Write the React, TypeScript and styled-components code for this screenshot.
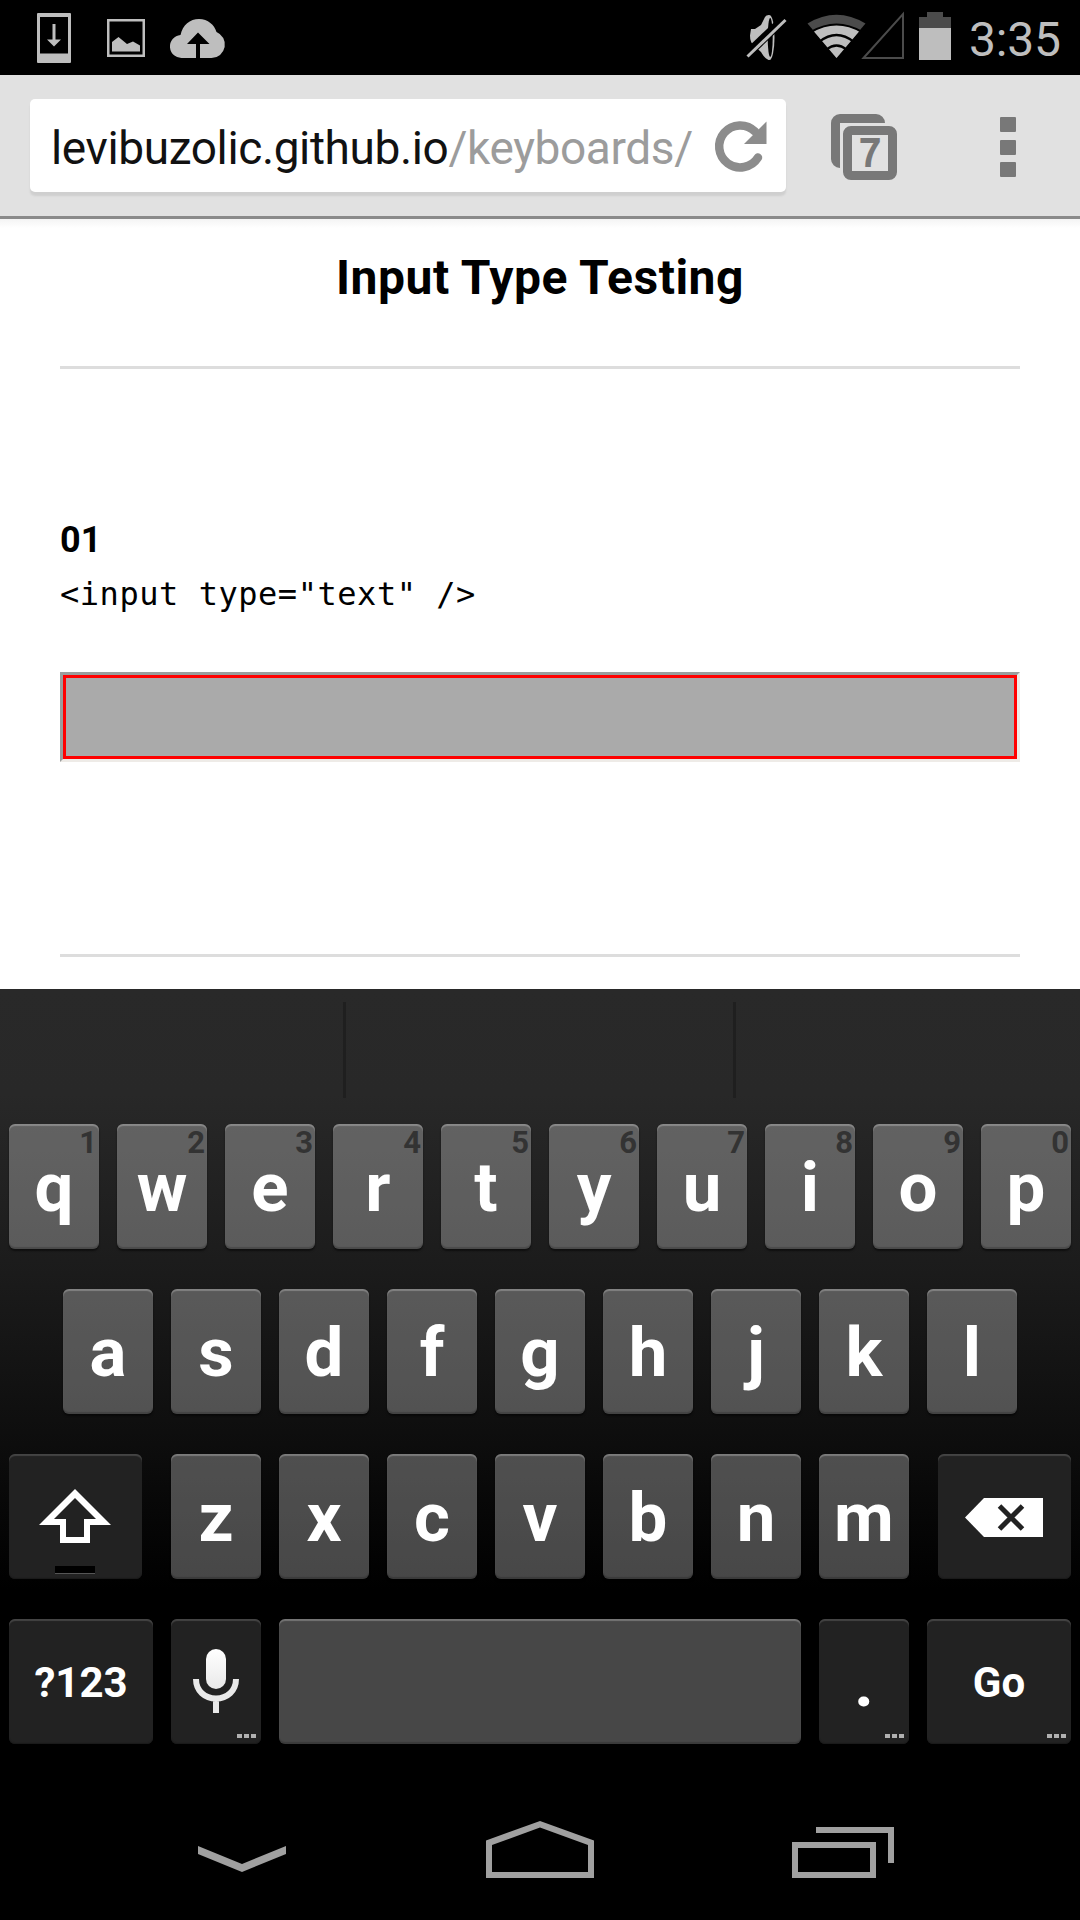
import React from "react";
import styled, { createGlobalStyle, css } from "styled-components";

const Global = createGlobalStyle`
  html, body { margin: 0; padding: 0; background: #000; }
  *, *::before, *::after { box-sizing: border-box; }
`;

const Screen = styled.main`
  display: flex;
  flex-direction: column;
  width: 1080px;
  height: 1920px;
  overflow: hidden;
  background: #000;
  font-family: Roboto, "Liberation Sans", sans-serif;
`;

/* ---------- status bar ---------- */

const StatusBar = styled.header`
  display: flex;
  align-items: center;
  justify-content: space-between;
  height: 75px;
  padding-left: 37px;
  background: #000;
`;

const Glyph = styled.svg`
  display: block;
  flex: none;
`;

const Clock = styled.time`
  width: 111px;
  padding-top: 4px;
  font-size: 48px;
  line-height: 75px;
  letter-spacing: -0.2px;
  color: #bebebe;
  white-space: nowrap;
`;

const StatusGroup = styled.div`
  display: flex;
  align-items: center;
`;

/* ---------- browser toolbar ---------- */

const Toolbar = styled.nav`
  display: flex;
  align-items: flex-start;
  height: 144px;
  padding: 24px 0 0 30px;
  background: #e1e1e1;
  border-bottom: 3px solid #8a8a8a;
`;

const Omnibox = styled.div`
  display: flex;
  align-items: center;
  width: 756px;
  height: 93px;
  padding-left: 21px;
  border-radius: 5px;
  background: #fff;
  box-shadow: 0 4px 2px #cfcfcf;
`;

const Url = styled.span`
  width: 660px;
  padding-top: 5px;
  font-size: 46px;
  line-height: 88px;
  letter-spacing: -0.38px;
  color: #111;
  white-space: nowrap;
`;

const UrlPath = styled.span`
  color: #9c9c9c;
`;

const TabsButton = styled.div`
  display: grid;
  width: 66px;
  height: 66px;
  margin: 15px 0 0 45px;
  & > * { grid-area: 1 / 1; }
`;

const TabCount = styled.span`
  padding: 12px 0 0 12px;
  text-align: center;
  font-family: "Liberation Sans", Arial, sans-serif;
  font-size: 38px;
  line-height: 55px;
  color: #787878;
  -webkit-text-stroke: 2px #787878;
`;

const MenuButton = styled.div`
  display: flex;
  flex-direction: column;
  gap: 7.5px;
  margin: 18px 0 0 103px;
`;

const MenuDot = styled.span`
  width: 16px;
  height: 15px;
  border-radius: 1px;
  background: #787878;
`;

/* ---------- web page ---------- */

const Page = styled.section`
  display: flex;
  flex-direction: column;
  height: 770px;
  padding: 0 60px;
  background: linear-gradient(#f4f4f4, #fff 9px);
  color: #000;
`;

const Title = styled.h1`
  margin: 30px 0 59px;
  text-align: center;
  font-size: 48px;
  font-weight: 700;
  line-height: 58px;
  letter-spacing: 0.5px;
  white-space: nowrap;
`;

const Rule = styled.hr`
  width: 100%;
  height: 3px;
  margin: 0;
  border: 0;
  background: #ddd;
`;

const Sample = styled.div`
  display: flex;
  flex-direction: column;
  height: 585px;
  padding-top: 148px;
`;

const Index = styled.h2`
  margin: 0;
  font-size: 36px;
  font-weight: 700;
  line-height: 46px;
`;

const Code = styled.code`
  margin: 6px 0 52px;
  font-family: "DejaVu Sans Mono", monospace;
  font-size: 32px;
  line-height: 51px;
  letter-spacing: 0.54px;
  white-space: pre;
`;

const TextField = styled.div`
  height: 90px;
  border: 3px solid;
  border-color: #9a9d9d #eeebe7 #eeebe7 #9a9d9d;
  background: #aaa;
  box-shadow: inset 0 0 0 3px #f00;
`;

/* ---------- keyboard ---------- */

const Keyboard = styled.section`
  height: 781px;
  background: linear-gradient(#292929 0, #282828 105px, #1b1b1b 285px, #0d0d0d 455px, #000 600px);
`;

const Suggestions = styled.div`
  display: grid;
  grid-template-columns: 343px 390px 1fr;
  height: 135px;
  padding: 13px 0 26px;
`;

const Suggestion = styled.div`
  & + & {
    border-left: 3px solid #1f1f1f;
  }
`;

const Rows = styled.div`
  display: flex;
  flex-direction: column;
  gap: 40px;
`;

const Row = styled.div<{ $inset?: number }>`
  display: flex;
  justify-content: space-between;
  height: 125px;
  padding: 0 ${(p) => p.$inset ?? 9}px;
`;

const KeyGroup = styled.div`
  display: flex;
  gap: 18px;
`;

const Key = styled.div<{ $w?: number; $dark?: boolean; $small?: boolean }>`
  position: relative;
  display: flex;
  align-items: center;
  justify-content: center;
  width: ${(p) => p.$w ?? 90}px;
  height: 125px;
  border-radius: 6px;
  color: #fff;
  font-size: ${(p) => (p.$small ? 42 : 69)}px;
  font-weight: 700;
  line-height: 1;
  ${(p) =>
    p.$dark
      ? css`
          background: #222;
          box-shadow: inset 0 2px 1px #444, inset 0 -1px 1px #1a1a1a;
        `
      : css`
          background: rgba(255, 255, 255, 0.28);
          box-shadow: inset 0 2px 1px rgba(255, 255, 255, 0.25), inset 0 -2px 1px rgba(0, 0, 0, 0.18), 0 2px 2px rgba(0, 0, 0, 0.5);
        `}
`;

const Letter = styled.span<{ $drop?: number }>`
  padding-top: ${(p) => p.$drop ?? 2}px;
`;

const Hint = styled.span`
  position: absolute;
  top: 3px;
  right: 2px;
  font-size: 31px;
  line-height: 32px;
  color: #333;
`;

const More = styled.span`
  position: absolute;
  right: 5px;
  bottom: 6px;
  display: flex;
  gap: 2px;
`;

const MoreDot = styled.i`
  width: 5px;
  height: 4px;
  background: #b0b0b0;
`;

const ShiftLamp = styled.span`
  position: absolute;
  left: 46px;
  bottom: 5px;
  width: 40px;
  height: 8px;
  background: #000;
  border-bottom: 1px solid #555;
`;

const DeleteGlyph = styled(Glyph)`
  margin: 2px 1px 0 0;
`;

/* ---------- navigation bar ---------- */

const NavBar = styled.footer`
  display: flex;
  align-items: flex-end;
  height: 150px;
  padding: 0 0 42px 198px;
  background: #000;
`;

const NavIcon = styled.svg<{ $gap?: number; $lift?: number }>`
  display: block;
  flex: none;
  margin-left: ${(p) => p.$gap ?? 0}px;
  margin-bottom: ${(p) => p.$lift ?? 0}px;
`;

const MoreDots = () => (
  <More>
    <MoreDot />
    <MoreDot />
    <MoreDot />
  </More>
);

const topRow = "qwertyuiop".split("");
const midRow = "asdfghjkl".split("");
const lowRow = "zxcvbnm".split("");

export default function App() {
  return (
    <Screen>
      <Global />
      <StatusBar>
        <Glyph width="190" height="75" viewBox="37 0 190 75" fill="#bebebe">
          <path fillRule="evenodd" d="M38 13h32q1 0 1 1v48q0 1-1 1H38q-1 0-1-1V14q0-1 1-1zM40 17v36.500h28V17z" />
          <path d="M52.500 24h3v15.500h5.500L54 46.500 47 39.500h5.500z" />
          <path fillRule="evenodd" d="M107 19h38v38h-38zM109.500 21.500v33h33v-33z" />
          <path d="M112 42l6.500-5L127 44l6-2.500 7 4v6h-28z" />
          <path d="M182.500 58a11.500 11.500 0 0 1-2-23C182.500 25 190 19 199 19s15.500 6 17.500 13A13.500 13.500 0 0 1 211.500 58H200V44h9.500L198 32.500 187 44h9v14z" />
        </Glyph>
        <StatusGroup>
          <Glyph width="223" height="75" viewBox="746 0 223 75">
            <g fill="#bebebe">
              <path d="M751 29h4l6-4 4-8q1-2 4-2v45q-4-1-8-8l-7-6.500q-4-3-4-10z" />
              <ellipse cx="769.500" cy="37.500" rx="5" ry="22.500" />
            </g>
            <ellipse cx="770.200" cy="37.500" rx="2.500" ry="19.500" fill="#000" />
            <path d="M744 57L784 19" stroke="#000" strokeWidth="9" />
            <path d="M747.500 56.500L785.500 20" stroke="#bebebe" strokeWidth="3" />
            <path d="M836.500 58L807.500 23.500Q836.500 6 865.500 23.500z" fill="#4b4b4b" />
            <path d="M836.500 58L813.500 31Q836.500 18 859.500 31z" fill="#bebebe" />
            <path
              d="M811 32Q836.500 17 862 32M819 42Q836.500 28 854 42M826.500 49.500Q836.500 41.500 846.500 49.500"
              fill="none"
              stroke="#000"
              strokeWidth="2.200"
            />
            <path d="M863.500 58L903 14V58z" fill="none" stroke="#4b4b4b" strokeWidth="2" />
            <path d="M919 28V17h8v-5H943v5h8v11z" fill="#4b4b4b" />
            <path d="M919 28h32v32h-32z" fill="#bebebe" />
          </Glyph>
          <Clock>3:35</Clock>
        </StatusGroup>
      </StatusBar>

      <Toolbar>
        <Omnibox>
          <Url>
            levibuzolic.github.io<UrlPath>/keyboards/</UrlPath>
          </Url>
          <Glyph width="60" height="60" viewBox="711 116 60 60">
            <path d="M758 157.500A21 21 0 1 1 755 131.500" fill="none" stroke="#8c8c8c" strokeWidth="8.500" strokeLinecap="round" />
            <path d="M766.500 121.500V144H744z" fill="#8c8c8c" />
          </Glyph>
        </Omnibox>
        <TabsButton>
          <Glyph width="66" height="66" viewBox="0 0 66 66" fill="#787878">
            <path d="M54 9A9 9 0 0 0 45 0H9A9 9 0 0 0 0 9v36a9 9 0 0 0 9 9V9z" />
            <path fillRule="evenodd" d="M20 12h38a8 8 0 0 1 8 8v38a8 8 0 0 1-8 8H20a8 8 0 0 1-8-8V20a8 8 0 0 1 8-8zM21 21v36h36V21z" />
          </Glyph>
          <TabCount>7</TabCount>
        </TabsButton>
        <MenuButton>
          <MenuDot />
          <MenuDot />
          <MenuDot />
        </MenuButton>
      </Toolbar>

      <Page>
        <Title>Input Type Testing</Title>
        <Rule />
        <Sample>
          <Index>01</Index>
          <Code>{'<input type="text" />'}</Code>
          <TextField />
        </Sample>
        <Rule />
      </Page>

      <Keyboard>
        <Suggestions>
          <Suggestion />
          <Suggestion />
          <Suggestion />
        </Suggestions>
        <Rows>
          <Row>
            {topRow.map((k, i) => (
              <Key key={k}>
                <Letter>{k}</Letter>
                <Hint>{(i + 1) % 10}</Hint>
              </Key>
            ))}
          </Row>
          <Row $inset={63}>
            {midRow.map((k) => (
              <Key key={k}>
                <Letter>{k}</Letter>
              </Key>
            ))}
          </Row>
          <Row>
            <Key $dark $w={133}>
              <Glyph width="73" height="56" viewBox="39 1489 73 56">
                <path fillRule="evenodd" fill="#fff" d="M75 1489L111 1525H90V1543H60V1525H39zM75 1498L54 1519H66V1537H84V1519H96z" />
              </Glyph>
              <ShiftLamp />
            </Key>
            <KeyGroup>
              {lowRow.map((k) => (
                <Key key={k}>
                  <Letter>{k}</Letter>
                </Key>
              ))}
            </KeyGroup>
            <Key $dark $w={133}>
              <DeleteGlyph width="78" height="39" viewBox="0 0 78 39">
                <path d="M0 19.500L19 0H78V39H19z" fill="#fff" />
                <path d="M34.500 8L57.500 31M57.500 8L34.500 31" stroke="#222" strokeWidth="5" />
              </DeleteGlyph>
            </Key>
          </Row>
          <Row>
            <Key $dark $small $w={144}>
              <Letter $drop={3}>?123</Letter>
            </Key>
            <Key $dark>
              <Glyph width="46" height="65" viewBox="0 0 46 65">
                <defs>
                  <linearGradient id="mic" x1="0" y1="0" x2="0" y2="1">
                    <stop offset="0" stopColor="#fff" />
                    <stop offset="1" stopColor="#e9e9e9" />
                  </linearGradient>
                </defs>
                <rect x="13" y="0" width="20" height="40" rx="10" fill="url(#mic)" />
                <path d="M3 30C3 42 12 49.500 23 49.500S43 42 43 30M23 49V64" fill="none" stroke="#e9e9e9" strokeWidth="6" />
              </Glyph>
              <MoreDots />
            </Key>
            <Key $w={522} />
            <Key $dark>
              <Letter>.</Letter>
              <MoreDots />
            </Key>
            <Key $dark $small $w={144}>
              <Letter $drop={3}>Go</Letter>
              <MoreDots />
            </Key>
          </Row>
        </Rows>
      </Keyboard>

      <NavBar>
        <NavIcon $lift={6} width="88" height="26" viewBox="0 0 88 26">
          <path d="M0 0L44 18 88 0V8L44 26 0 8z" fill="#a0a0a0" />
        </NavIcon>
        <NavIcon $gap={200} width="108" height="57" viewBox="0 0 108 57">
          <path fillRule="evenodd" fill="#a0a0a0" d="M54 0L108 19.500V57H0V19.500zM54 6.500L6 24V51H102V24z" />
        </NavIcon>
        <NavIcon $gap={198} width="102" height="51" viewBox="0 0 102 51" fill="#a0a0a0">
          <path d="M24 0H102V36H96V6H24z" />
          <path fillRule="evenodd" d="M0 15H84V51H0zM6 21V45H78V21z" />
        </NavIcon>
      </NavBar>
    </Screen>
  );
}
